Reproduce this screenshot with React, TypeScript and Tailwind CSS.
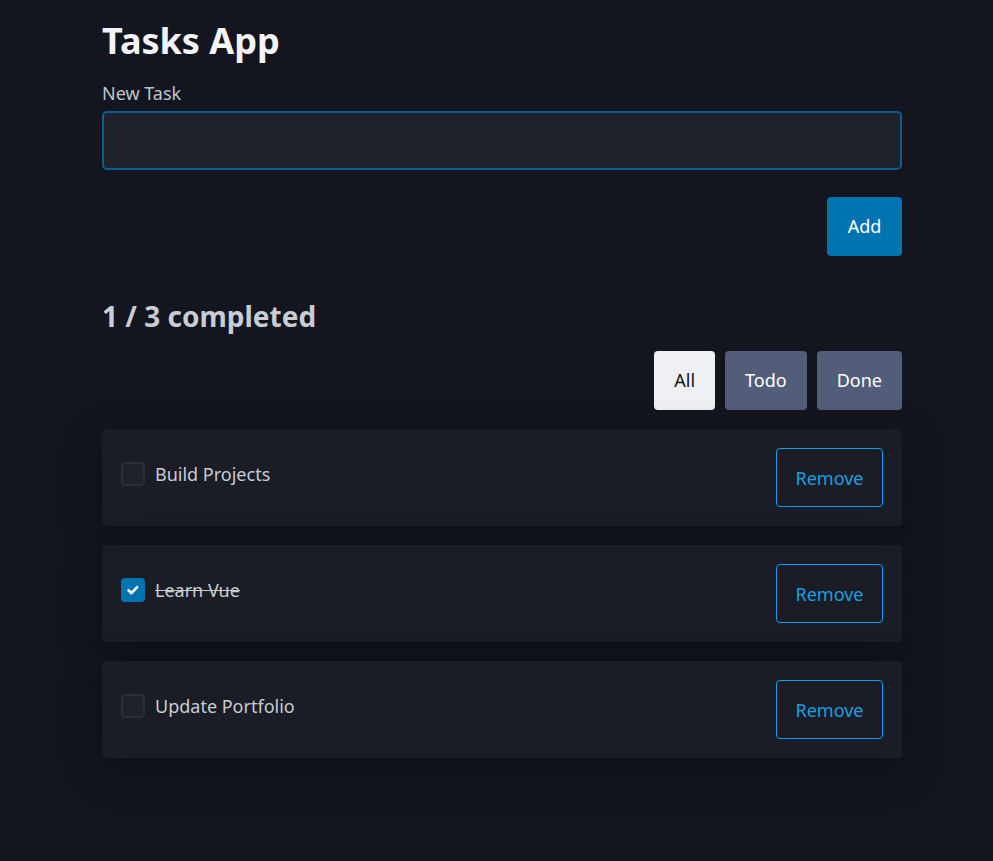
import React, { useState } from 'react';

type Task = { id: number; title: string; done: boolean };
type Filter = 'All' | 'Todo' | 'Done';

const initialTasks: Task[] = [
    { id: 1, title: 'Build Projects', done: false },
    { id: 2, title: 'Learn Vue', done: true },
    { id: 3, title: 'Update Portfolio', done: false },
];

export default function App() {
    const [tasks, setTasks] = useState<Task[]>(initialTasks);
    const [filter, setFilter] = useState<Filter>('All');
    const [draft, setDraft] = useState('');

    const completed = tasks.filter((t) => t.done).length;
    const visible = tasks.filter((t) =>
        filter === 'All' ? true : filter === 'Done' ? t.done : !t.done
    );

    const addTask = () => {
        if (!draft.trim()) return;
        setTasks([...tasks, { id: Date.now(), title: draft.trim(), done: false }]);
        setDraft('');
    };

    return (
        <div
            className="min-h-[861px] bg-[#13161e] text-[#c9ccd3]"
            style={{ fontFamily: '"Noto Sans", "Open Sans", sans-serif' }}
        >
            <div className="ml-[102px] w-[800px] pt-[15px] pb-[80px]">
                <h1 className="text-[36px] font-bold leading-[52px] text-[#f3f4f7]">Tasks App</h1>

                {/* Новая задача */}
                <label className="mt-[15px] block text-[18px] leading-[23px] text-[#c0c4cc]">New Task</label>
                <input
                    value={draft}
                    onChange={(e) => setDraft(e.target.value)}
                    className="mt-[6px] block h-[59px] w-full rounded-[5px] border-2 border-[#0b5d93] bg-[#1e222b] px-4 text-[18px] text-[#e5e7eb] outline-none"
                />
                <div className="mt-[27px] flex justify-end">
                    <button
                        onClick={addTask}
                        className="h-[59px] w-[75px] rounded-[4px] bg-[#0074b0] text-[18px] text-white"
                    >
                        Add
                    </button>
                </div>

                {/* Счётчик */}
                <h2 className="mt-[40px] text-[28px] font-bold leading-[40px] text-[#c8ccd4]">
                    {completed} / {tasks.length} completed
                </h2>

                <div className="mt-[15px] flex justify-end gap-[10px]">
                    {(['All', 'Todo', 'Done'] as Filter[]).map((f) => (
                        <button
                            key={f}
                            onClick={() => setFilter(f)}
                            className={
                                'h-[59px] rounded-[4px] px-[20px] text-[18px] ' +
                                (filter === f ? 'bg-[#eff0f4] text-[#111318]' : 'bg-[#525d79] text-white')
                            }
                        >
                            {f}
                        </button>
                    ))}
                </div>

                {/* Список задач */}
                <ul className="mt-[19px] flex flex-col gap-[19px]">
                    {visible.map((t) => (
                        <li
                            key={t.id}
                            className="flex h-[97px] items-center justify-between rounded-[4px] bg-[#1a1d25] px-[19px] shadow-[0_12px_40px_rgba(0,0,0,0.3)]"
                        >
                            <label className="-mt-[8px] flex items-center gap-[10px]">
                                <button
                                    onClick={() =>
                                        setTasks(tasks.map((x) => (x.id === t.id ? { ...x, done: !x.done } : x)))
                                    }
                                    className={
                                        'flex h-[24px] w-[24px] items-center justify-center rounded-[4px] ' +
                                        (t.done
                                            ? 'bg-[#0074b0]'
                                            : 'border-2 border-[#2b2f3a] bg-[#1e222b]')
                                    }
                                >
                                    {t.done && (
                                        <svg width="16" height="16" viewBox="0 0 16 16" fill="none">
                                            <path
                                                d="M3.5 8.3l3 2.9 5.6-6"
                                                stroke="white"
                                                strokeWidth="2.6"
                                                strokeLinecap="round"
                                                strokeLinejoin="round"
                                            />
                                        </svg>
                                    )}
                                </button>
                                <span
                                    className={
                                        'text-[18px] leading-[24px] text-[#c9ccd3] ' + (t.done ? 'line-through' : '')
                                    }
                                >
                                    {t.title}
                                </span>
                            </label>
                            <button
                                onClick={() => setTasks(tasks.filter((x) => x.id !== t.id))}
                                className="h-[59px] w-[107px] rounded-[4px] border border-[#0aa0f2] pt-[2px] text-[18px] text-[#1a9fe6]"
                            >
                                Remove
                            </button>
                        </li>
                    ))}
                </ul>
            </div>
        </div>
    );
}
